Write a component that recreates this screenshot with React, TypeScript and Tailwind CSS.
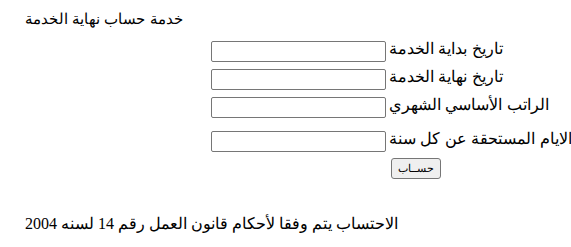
import React from "react";

const rows = [
  "تاريخ بداية الخدمة",
  "تاريخ نهاية الخدمة",
  "الراتب الأساسي الشهري",
  "الايام المستحقة عن كل سنة",
];

export default function App() {
  return (
    <div className="w-[571px] h-[247px] bg-white text-black overflow-hidden">
      <div className="pl-[25px] pt-[10px] h-[41px] text-[15px] leading-[18px] font-['Liberation_Sans',Arial,sans-serif]">
        خدمة حساب نهاية الخدمة
      </div>
      <div className="pl-[211px] flex flex-col font-['Liberation_Sans',Arial,sans-serif]">
        {rows.map((r, i) => (
          <div key={i} className={`flex items-start ${i === 2 ? "h-[34px]" : "h-[28px]"}`}>
            <input
              type="text"
              className="w-[175px] h-[21px] border border-[#767676] rounded-[2px] bg-white"
            />
            <span className="pl-[3px] text-[16px] leading-[18px] -mt-[1px] whitespace-nowrap">{r}</span>
          </div>
        ))}
        <div className="flex h-[21px] mt-[-1px]">
          <div className="w-[180px]" />
          <button className="w-[50px] h-[21px] border border-[#767676] rounded-[3px] bg-[#efefef] text-[11px] leading-[13px] font-['Liberation_Sans',Arial,sans-serif]">
            حســاب
          </button>
        </div>
      </div>
      <div className="pl-[25px] pt-[35px] text-[16px] leading-[20px] font-['Liberation_Serif','Times_New_Roman',serif]">
        الاحتساب يتم وفقا لأحكام قانون العمل رقم 14 لسنه 2004
      </div>
    </div>
  );
}
